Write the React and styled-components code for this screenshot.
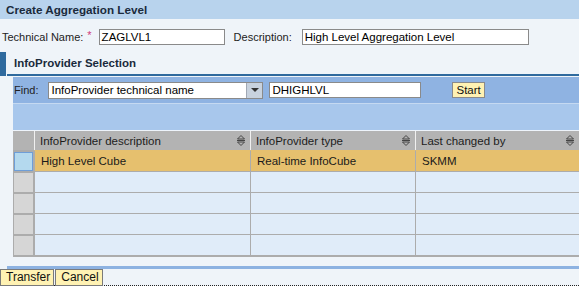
import React from "react";
import styled, { createGlobalStyle } from "styled-components";

const Global = createGlobalStyle`
  html, body { margin: 0; padding: 0; }
  body {
    width: 579px; height: 286px; overflow: hidden;
    background: #eff4f9;
    font-family: "Liberation Sans", Arial, sans-serif;
    font-size: 11px; color: #000;
  }
`;

const Page = styled.div`
  width: 579px; height: 286px;
  display: flex; flex-direction: column;
  font-family: "Liberation Sans", Arial, sans-serif;
  font-size: 11px;
  & > * { flex-shrink: 0; }
`;

const TitleBar = styled.div`
  height: 19px; background: #b8d3ed;
  display: flex; align-items: center;
  padding-left: 6px;
  font-weight: bold; font-size: 11.7px; color: #1a2a3c;
`;

const FieldRow = styled.div`
  height: 30px; display: flex; align-items: center;
  padding-left: 2px; padding-top: 3px;
`;

const Label = styled.span`
  color: #222;
  margin-right: ${p => p.$mr || 0}px;
`;

const Req = styled.span`
  color: #d03a7a; margin-left: 4px; margin-right: 7px; font-size: 11px;
  position: relative; top: -2px;
`;

const Input = styled.div`
  width: ${p => p.$w}px; height: 14px;
  border: 1px solid #8a8a8a; background: #fff;
  padding-left: 2px; line-height: 14px; box-sizing: content-box;
  margin-right: ${p => p.$mr || 0}px;
  white-space: nowrap; overflow: hidden;
  font-size: 11.5px;
`;

const SectionHead = styled.div`
  display: flex; height: 24px;
`;

const SectionBar = styled.div`
  width: 6px; background: #2f6a9e;
`;

const SectionTitle = styled.div`
  flex: 1; margin-left: 1px;
  border-bottom: 2px solid #2f6a9e;
  display: flex; align-items: center; padding-left: 7px;
  font-weight: bold; font-size: 11.5px; color: #1a2a3c;
`;

const Content = styled.div`
  margin-left: 13px; margin-top: 1px;
  display: flex; flex-direction: column;
`;

const FindBar = styled.div`
  height: 26px; background: #8fb3e2;
  display: flex; align-items: center; padding-left: 1px;
  border-bottom: 1px solid #c5d9f1;
`;

const Select = styled.div`
  width: 213px; height: 15px; border: 1px solid #8a8a8a; background: #fff;
  display: flex; margin-left: 10px; margin-right: 6px;
`;

const SelectText = styled.div`
  flex: 1; padding-left: 2px; line-height: 15px; color: #000; font-size: 11.5px;
`;

const SelectBtn = styled.div`
  width: 15px; border-left: 1px solid #a0a8b4; background: #c8d2de;
  display: flex; align-items: center; justify-content: center;
`;

const Button = styled.div`
  height: 14px; padding: 0 3px; line-height: 14px;
  background: #fff2b3; border: 1px solid #8a8a8a;
  margin-left: ${p => p.$ml || 0}px;
  color: #111; font-size: 11.5px;
`;

const Toolbar = styled.div`
  height: 26px; background: #a8c7ec;
  border-bottom: 1px solid #eef4fb;
`;

const Table = styled.div`
  display: grid;
  grid-template-columns: 21px 216px 165px 1fr;
  border-bottom: 2px solid #acacac;
`;

const HeadCell = styled.div`
  height: 19px; background: #b3b3b3;
  border-left: ${p => p.$first ? "none" : "1px solid #f0f0f0"};
  display: flex; align-items: center; justify-content: space-between;
  padding: 0 4px 0 5px; color: #1c1c1c; font-size: 11.5px;
`;

const Cell = styled.div`
  height: 20px; background: ${p => p.$sel ? "#e6c06e" : "#e0ecf9"};
  border-top: 1px solid ${p => p.$sel ? "#e6c06e" : "#acacac"};
  border-left: 1px solid #acacac;
  display: flex; align-items: center; padding-left: 6px;
  color: #1a1a1a; font-size: 11.5px;
`;

const SelCell = styled.div`
  height: 20px; border-top: 1px solid #acacac;
  background: #acacac; padding: 0 1px;
  display: flex;
`;

const SelInner = styled.div`
  flex: 1; margin-top: 1px;
  background: ${p => p.$sel ? "#b4d9ee" : "#d6d6d6"};
  border: ${p => p.$sel ? "1px solid #6e9ed8" : "none"};
`;

const Footer = styled.div`
  margin-top: 9px;
  height: 3px; background: #8db2e1; margin-left: 7px;
`;

const ButtonRow = styled.div`
  display: flex; height: 16px;
  border-bottom: 1px dotted #222;
`;

const FootBtn = styled.div`
  height: 15px; line-height: 15px; padding: 0 3px 0 5px;
  background: #fff2b3; border: 1px solid #7a7a7a;
  margin-right: 1px; color: #111; font-size: 12px;
`;

const SortIcon = () => (
  <svg width="10" height="13" viewBox="0 0 10 13">
    <path d="M1.5 5 L5 1.5 L8.5 5 Z" fill="none" stroke="#444" strokeWidth="1" strokeLinejoin="round" />
    <line x1="1" y1="6.5" x2="9" y2="6.5" stroke="#444" />
    <path d="M1.5 8 L5 11.5 L8.5 8 Z" fill="none" stroke="#444" strokeWidth="1" strokeLinejoin="round" />
  </svg>
);

const rows = [
  { sel: true, cells: ["High Level Cube", "Real-time InfoCube", "SKMM"] },
  { cells: ["", "", ""] },
  { cells: ["", "", ""] },
  { cells: ["", "", ""] },
  { cells: ["", "", ""] },
];

export default function App() {
  return (
    <Page>
      <Global />
      <TitleBar>Create Aggregation Level</TitleBar>
      <FieldRow>
        <Label>Technical Name:</Label>
        <Req>*</Req>
        <Input $w={122} $mr={9}>ZAGLVL1</Input>
        <Label $mr={10}>Description:</Label>
        <Input $w={223}>High Level Aggregation Level</Input>
      </FieldRow>
      <SectionHead>
        <SectionBar />
        <SectionTitle>InfoProvider Selection</SectionTitle>
      </SectionHead>
      <Content>
        <FindBar>
          <Label>Find:</Label>
          <Select>
            <SelectText>InfoProvider technical name</SelectText>
            <SelectBtn>
              <svg width="8" height="5" viewBox="0 0 8 5"><path d="M0 0 L8 0 L4 4 Z" fill="#333" /></svg>
            </SelectBtn>
          </Select>
          <Input $w={148}>DHIGHLVL</Input>
          <Button $ml={31}>Start</Button>
        </FindBar>
        <Toolbar />
        <Table>
          <HeadCell $first />
          <HeadCell>InfoProvider description<SortIcon /></HeadCell>
          <HeadCell>InfoProvider type<SortIcon /></HeadCell>
          <HeadCell>Last changed by<SortIcon /></HeadCell>
          {rows.map((r, i) => (
            <React.Fragment key={i}>
              <SelCell><SelInner $sel={r.sel} /></SelCell>
              {r.cells.map((c, j) => (
                <Cell key={j} $sel={r.sel}>{c}</Cell>
              ))}
            </React.Fragment>
          ))}
        </Table>
      </Content>
      <Footer />
      <ButtonRow>
        <FootBtn>Transfer</FootBtn>
        <FootBtn>Cancel</FootBtn>
      </ButtonRow>
    </Page>
  );
}
